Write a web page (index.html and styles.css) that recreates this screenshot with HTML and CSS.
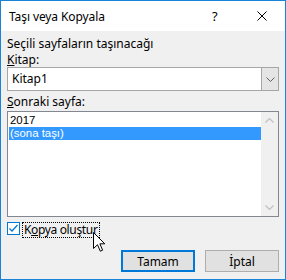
FILE: index.html
```html
<!DOCTYPE html>
<html>
<head>
<meta charset="utf-8">
<link rel="stylesheet" href="styles.css">
</head>
<body>
<div class="window">
  <div class="titlebar">
    <span class="title">Taşı veya Kopyala</span>
    <span class="help">?</span>
    <span class="close"><svg width="10" height="10" viewBox="0 0 10 10"><path d="M0.5 0.5 L9.5 9.5 M9.5 0.5 L0.5 9.5" stroke="#000" stroke-width="1" fill="none"/></svg></span>
  </div>
  <div class="content">
    <div class="label l1">Seçili sayfaların taşınacağı</div>
    <div class="label l2"><u>K</u>itap:</div>
    <div class="combo">
      <span class="combo-text">Kitap1</span>
      <span class="combo-btn"><svg width="9" height="5" viewBox="0 0 9 5"><path d="M0.5 0.5 L4.5 4.5 L8.5 0.5" stroke="#606060" stroke-width="1" fill="none"/></svg></span>
    </div>
    <div class="label l3"><u>S</u>onraki sayfa:</div>
    <div class="listbox">
      <div class="items">
        <div class="item">2017</div>
        <div class="item sel">(sona taşı)</div>
      </div>
      <div class="scrollbar">
        <svg width="9" height="5" viewBox="0 0 9 5"><path d="M0.5 4.5 L4.5 0.5 L8.5 4.5" stroke="#c4c4c4" stroke-width="1.4" fill="none"/></svg>
        <svg width="9" height="5" viewBox="0 0 9 5"><path d="M0.5 0.5 L4.5 4.5 L8.5 0.5" stroke="#c4c4c4" stroke-width="1.4" fill="none"/></svg>
      </div>
    </div>
    <div class="check-row">
      <span class="checkbox"><svg width="11" height="11" viewBox="0 0 11 11"><path d="M1.5 5.5 L4 8 L9.5 2" stroke="#0078d7" stroke-width="1.3" fill="none"/></svg></span>
      <span class="check-label">K<u>o</u>pya oluştur</span>
    </div>
    <div class="buttons">
      <span class="btn default">Tamam</span>
      <span class="btn">İptal</span>
    </div>
  </div>
  <svg class="cursor" width="13" height="20" viewBox="0 0 13 20"><path d="M0.5 0.5 L0.5 16.5 L4.5 12.7 L7.3 19.2 L9.6 18.2 L6.9 11.8 L11.8 11.8 Z" fill="#fff" stroke="#000" stroke-width="1" stroke-linejoin="miter"/></svg>
</div>
</body>
</html>
```
FILE: styles.css
```css
* { box-sizing: border-box; }
html, body { margin: 0; padding: 0; }
body { font-family: "Noto Sans", "Open Sans", sans-serif; font-size: 12px; color: #000; }
.window {
  position: relative;
  width: 286px;
  height: 280px;
  border: 1px solid #1883d7;
  background: #f0f0f0;
  display: flex;
  flex-direction: column;
}
.titlebar {
  height: 30px;
  background: #fff;
  display: flex;
  align-items: center;
  padding-left: 8px;
}
.title { font-size: 12px; flex: 1; letter-spacing: -0.1px; }
.help { font-size: 13px; width: 20px; margin-right: 25px; }
.close { width: 10px; height: 10px; margin-right: 18px; display: flex; }
.content { padding: 5px 6px 0 6px; display: flex; flex-direction: column; }
.label { line-height: 15px; }
.l2 { margin-top: 2px; line-height: 14px; }
.l3 { margin-top: 3px; line-height: 15px; }
.combo {
  height: 24px;
  border: 1px solid #a6a6a6;
  background: #fff;
  display: flex;
}
.combo-text { flex: 1; padding-left: 4px; line-height: 22px; }
.combo-btn {
  width: 17px;
  background: #e5e5e5;
  border-left: 1px solid #a6a6a6;
  display: flex;
  align-items: center;
  justify-content: center;
}
.listbox {
  margin-top: 2px;
  height: 106px;
  border: 1px solid #828790;
  background: #fff;
  display: flex;
}
.items { flex: 1; padding: 2px 0 0 1px; }
.item {
  height: 13px;
  line-height: 13px;
  padding-left: 1px;
  font-family: "Liberation Sans", Arial, sans-serif;
  font-size: 11.4px;
}
.item.sel { background: #3399ff; color: #fff; }
.scrollbar {
  width: 17px;
  background: #f0f0f0;
  display: flex;
  flex-direction: column;
  justify-content: space-between;
  align-items: center;
  padding: 6px 0 6px 0;
}
.check-row { margin-top: 5px; display: flex; align-items: center; height: 16px; }
.checkbox {
  width: 13px; height: 13px;
  border: 1px solid #0078d7;
  background: #fff;
  display: flex; align-items: center; justify-content: center;
  margin-top: -3px;
}
.check-label {
  margin-left: 2px;
  border: 1px dotted #000;
  height: 16px;
  line-height: 14px;
  padding: 0 1px;
  letter-spacing: -0.35px;
}
.buttons { margin-top: 12px; display: flex; justify-content: flex-end; gap: 10px; }
.btn {
  width: 74px; height: 22px;
  background: #e1e1e1;
  border: 1px solid #adadad;
  display: flex; align-items: center; justify-content: center;
}
.btn.default { border: 2px solid #0078d7; }
.cursor { position: absolute; left: 92px; top: 231px; }
```
